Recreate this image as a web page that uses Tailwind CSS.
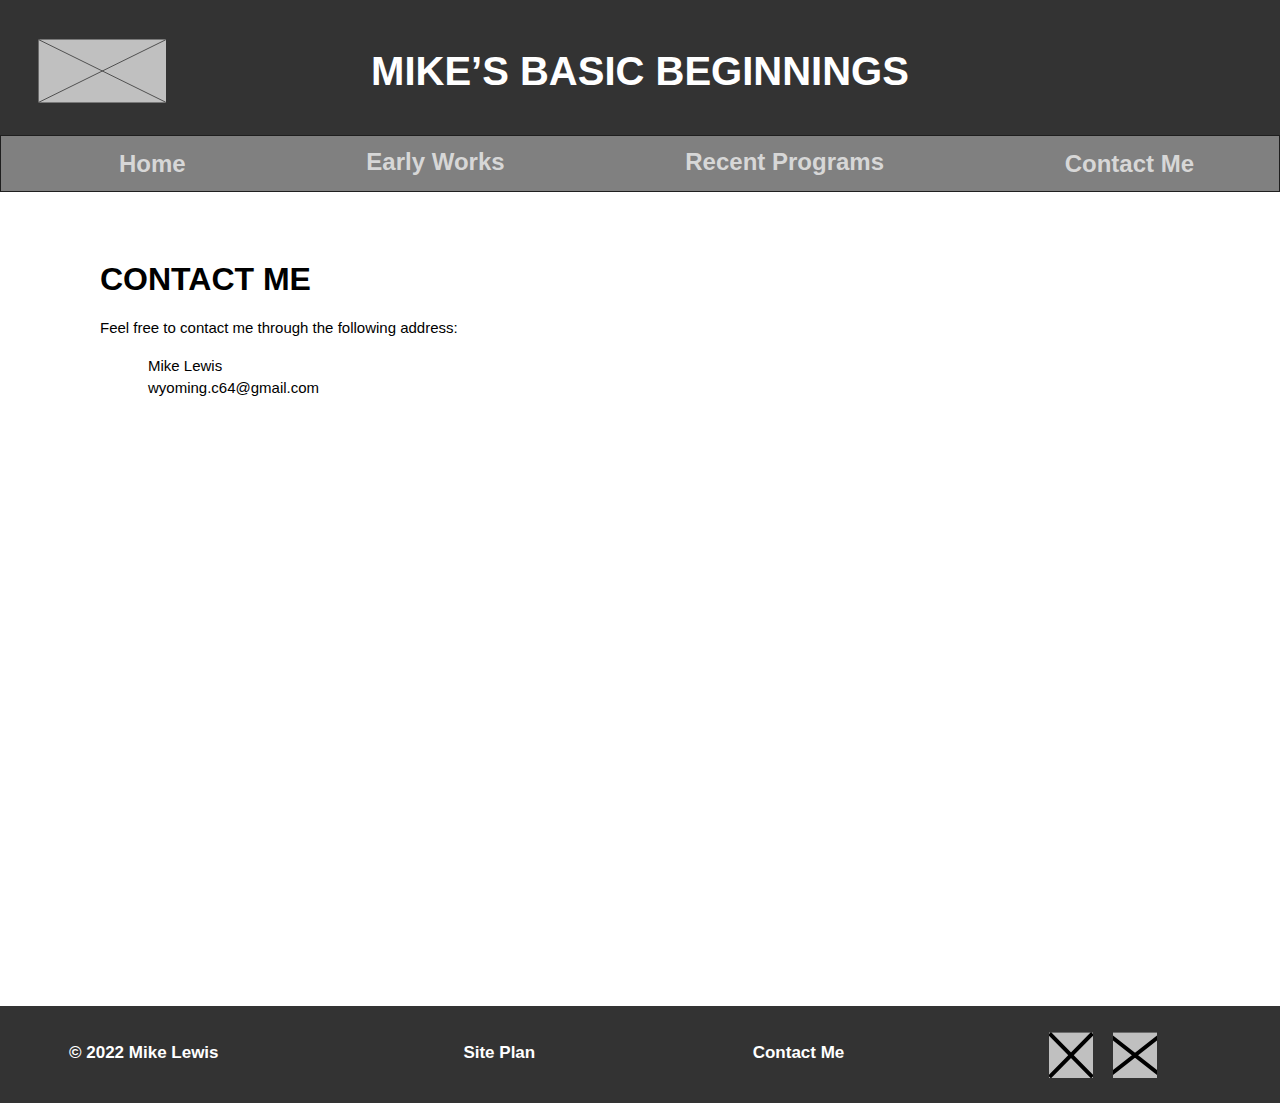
<!DOCTYPE html>
<html lang="en">
<head>
<meta charset="utf-8">
<meta name="viewport" content="width=device-width, initial-scale=1">
<title>Mike’s Basic Beginnings</title>
<script src="https://cdn.jsdelivr.net/npm/@tailwindcss/browser@4"></script>
</head>
<body class="flex min-h-screen flex-col bg-white font-['Liberation_Sans',Arial,sans-serif] text-black">
  <header class="grid h-[135px] grid-cols-[1fr_auto_1fr] items-center bg-[#333333] px-[38px] pt-1.5">
    <svg class="h-16 w-32" viewBox="0 0 128 64" role="img" aria-label="Logo">
      <rect x="0.6" y="0.5" width="127.4" height="63" fill="#c0c0c0"/>
      <path d="M1 0.8 127.7 63.2M127.7 0.8 1 63.2" stroke="#333333" stroke-width="0.8" fill="none"/>
    </svg>
    <p class="text-[40px] leading-12 font-bold text-white">MIKE’S BASIC BEGINNINGS</p>
  </header>
  <nav class="flex h-[57px] items-center justify-between border border-[#1f1f1f] bg-[#808080] pr-[85px] pl-[118px] text-2xl leading-7 font-bold text-[#d7d7d7]">
    <a href="#">Home</a>
    <a href="#" class="pb-1">Early Works</a>
    <a href="#" class="pb-1">Recent Programs</a>
    <a href="#">Contact Me</a>
  </nav>
  <main class="grow px-[100px] pt-[67px]">
    <h1 class="text-[32px] leading-10 font-bold">CONTACT ME</h1>
    <p class="mt-[18px] text-[15px] leading-[22px]">Feel free to contact me through the following address:</p>
    <address class="mt-4 pl-12 text-[15px] leading-[22px] not-italic">Mike Lewis<br>wyoming.c64@gmail.com</address>
  </main>
  <footer class="grid h-[97px] grid-cols-[394fr_289fr_296fr_auto] items-center bg-[#333333] pr-[123px] pl-[69px] text-[17px] leading-6 font-bold text-white">
    <p class="pb-1">© 2022 Mike Lewis</p>
    <div class="pb-1"><a href="#">Site Plan</a></div>
    <div class="pb-1"><a href="#">Contact Me</a></div>
    <div class="flex gap-5">
      <svg class="h-[46px] w-11" viewBox="0 0 44 46" role="img" aria-label="Social link"><rect y="0.6" width="44" height="45.4" fill="#c0c0c0"/><path d="M0.5 1.5 43.5 45M43.5 1.5 0.5 45" stroke="#000" stroke-width="4"/></svg>
      <svg class="h-[46px] w-11" viewBox="0 0 44 46" role="img" aria-label="Social link"><rect y="0.6" width="44" height="45.4" fill="#c0c0c0"/><path d="M-2 4.5 46 42M46 4.5 -2 42" stroke="#000" stroke-width="4"/></svg>
    </div>
  </footer>
</body>
</html>
